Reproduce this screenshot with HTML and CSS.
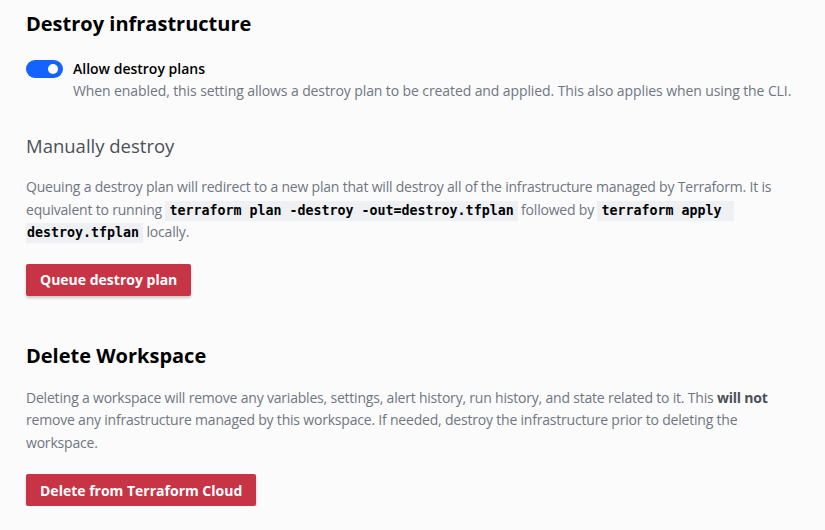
FILE: index.html
```html
<!DOCTYPE html>
<html>
<head>
<meta charset="utf-8">
<link rel="stylesheet" href="styles.css">
</head>
<body>
<div class="page">
  <section class="section">
    <h2 class="title">Destroy infrastructure</h2>
    <div class="toggle-row">
      <span class="toggle"><span class="knob"></span></span>
      <div class="toggle-text">
        <div class="toggle-label">Allow destroy plans</div>
        <div class="toggle-help">When enabled, this setting allows a destroy plan to be created and applied. This also applies when using the CLI.</div>
      </div>
    </div>
    <h3 class="subtitle">Manually destroy</h3>
    <p class="para">Queuing a destroy plan will redirect to a new plan that will destroy all of the infrastructure managed by Terraform. It is equivalent to running <code class="code">terraform plan -destroy -out=destroy.tfplan</code> followed by <code class="code code-start">terraform apply</code> <code class="code code-cont">destroy.tfplan</code> locally.</p>
    <button class="btn">Queue destroy plan</button>
  </section>
  <section class="section second">
    <h2 class="title">Delete Workspace</h2>
    <p class="para">Deleting a workspace will remove any variables, settings, alert history, run history, and state related to it. This <strong>will not</strong> remove any infrastructure managed by this workspace. If needed, destroy the infrastructure prior to deleting the workspace.</p>
    <button class="btn">Delete from Terraform Cloud</button>
  </section>
</div>
</body>
</html>
```
FILE: styles.css
```css
html, body {
  margin: 0;
  padding: 0;
  background: #fbfbfc;
}
body {
  font-family: "Open Sans", "Noto Sans", sans-serif;
  color: #4b5059;
}
.page {
  padding: 9px 26px 0 26px;
  width: 773px;
}
.title {
  margin: 0;
  font-size: 20px;
  line-height: 30px;
  font-weight: 700;
  color: #000;
}
.toggle-row {
  display: flex;
  gap: 10px;
  margin-top: 19px;
  align-items: flex-start;
}
.toggle {
  flex: none;
  width: 37px;
  height: 18px;
  border-radius: 9px;
  background: #1563ff;
  position: relative;
  margin-top: 2px;
}
.knob {
  position: absolute;
  right: 5px;
  top: 4px;
  width: 10px;
  height: 10px;
  border-radius: 50%;
  background: #fff;
}
.toggle-label {
  font-size: 14px;
  line-height: 22px;
  font-weight: 600;
  color: #000;
}
.toggle-help {
  font-size: 14px;
  line-height: 22px;
  color: #6f7682;
  letter-spacing: -0.1px;
}
.subtitle {
  margin: 30px 0 0 0;
  font-size: 18.5px;
  line-height: 28px;
  font-weight: 400;
  color: #4b5059;
}
.para {
  margin: 16px 0 0 0;
  font-size: 14px;
  line-height: 22.5px;
  color: #6f7682;
  letter-spacing: -0.2px;
}
.para strong {
  color: #4b5059;
}
.code {
  display: inline-block;
  font-family: "DejaVu Sans Mono", monospace;
  font-size: 13.3px;
  line-height: 20px;
  font-weight: 700;
  color: #000;
  background: #eef0f3;
  padding: 0 4px;
  letter-spacing: 0;
}
.code-start {
  padding-right: 12px;
}
.code-cont {
  padding-left: 1px;
}
.btn {
  display: block;
  margin-top: 20px;
  height: 32px;
  padding: 0 14px;
  border: none;
  border-radius: 2px;
  background: #c73445;
  color: #fff;
  font-family: "Open Sans", "Noto Sans", sans-serif;
  font-size: 14px;
  font-weight: 700;
  box-shadow: 0 2px 3px rgba(0,0,0,0.2);
}
.second {
  margin-top: 45px;
}
```
